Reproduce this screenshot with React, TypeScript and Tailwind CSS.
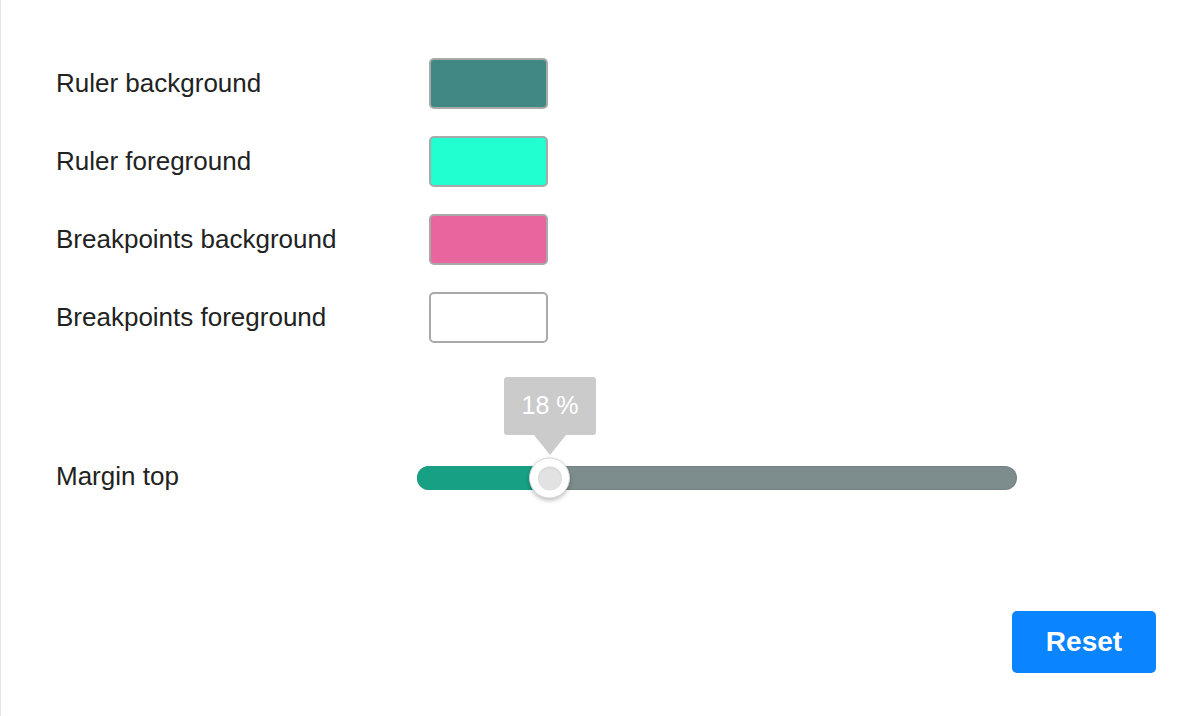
const swatches = [
  { label: "Ruler background", color: "bg-[#418783]" },
  { label: "Ruler foreground", color: "bg-[#21ffd0]" },
  { label: "Breakpoints background", color: "bg-[#e8659e]" },
  { label: "Breakpoints foreground", color: "bg-white" },
];

export default function App() {
  return (
    <div className="flex h-[716px] flex-col border-l border-[#e4e4e4] bg-white pl-[55px] pr-[42px] pt-[44px] pb-[43px] font-['Liberation_Sans',Arial,sans-serif] text-[#222]">
      {swatches.map((s) => (
        <div key={s.label} className="flex h-[78px] items-center">
          <span className="w-[373px] text-[26px]">{s.label}</span>
          <div className={`h-[51px] w-[119px] rounded-[5px] border-2 border-[#a9a9a9] ${s.color}`} />
        </div>
      ))}

      {/* Margin top slider */}
      <div className="mt-[83px] flex h-[78px] items-center">
        <span className="w-[361px] pb-[3px] text-[26px]">Margin top</span>
        <div className="relative h-[24px] w-[600px] rounded-full bg-[#7d8c8c] shadow-[inset_0_0_0_1px_rgba(0,0,0,0.08)]">
          <div className="h-full w-[133px] rounded-l-full bg-[#17a083]" />
          <div className="absolute bottom-[55px] left-[87px] flex h-[58px] w-[92px] items-center justify-center rounded-[3px] bg-[#cbcbcb] text-[25px] text-white">
            18 %
            <div className="absolute top-full left-1/2 h-0 w-0 -translate-x-1/2 border-x-[16px] border-t-[20px] border-x-transparent border-t-[#cbcbcb]" />
          </div>
          <div className="absolute top-1/2 left-[112px] flex h-[41px] w-[41px] -translate-y-1/2 items-center justify-center rounded-full border border-[#d6d6d6] bg-white shadow-[0_2px_4px_rgba(0,0,0,0.25)]">
            <div className="h-[24px] w-[24px] rounded-full bg-[#e2e2e2] shadow-[inset_0_1px_2px_rgba(0,0,0,0.08)]" />
          </div>
        </div>
      </div>

      <div className="mt-auto flex justify-end">
        <button className="h-[62px] w-[144px] rounded-[5px] bg-[#0a84ff] text-[28px] font-bold text-white">
          Reset
        </button>
      </div>
    </div>
  );
}
